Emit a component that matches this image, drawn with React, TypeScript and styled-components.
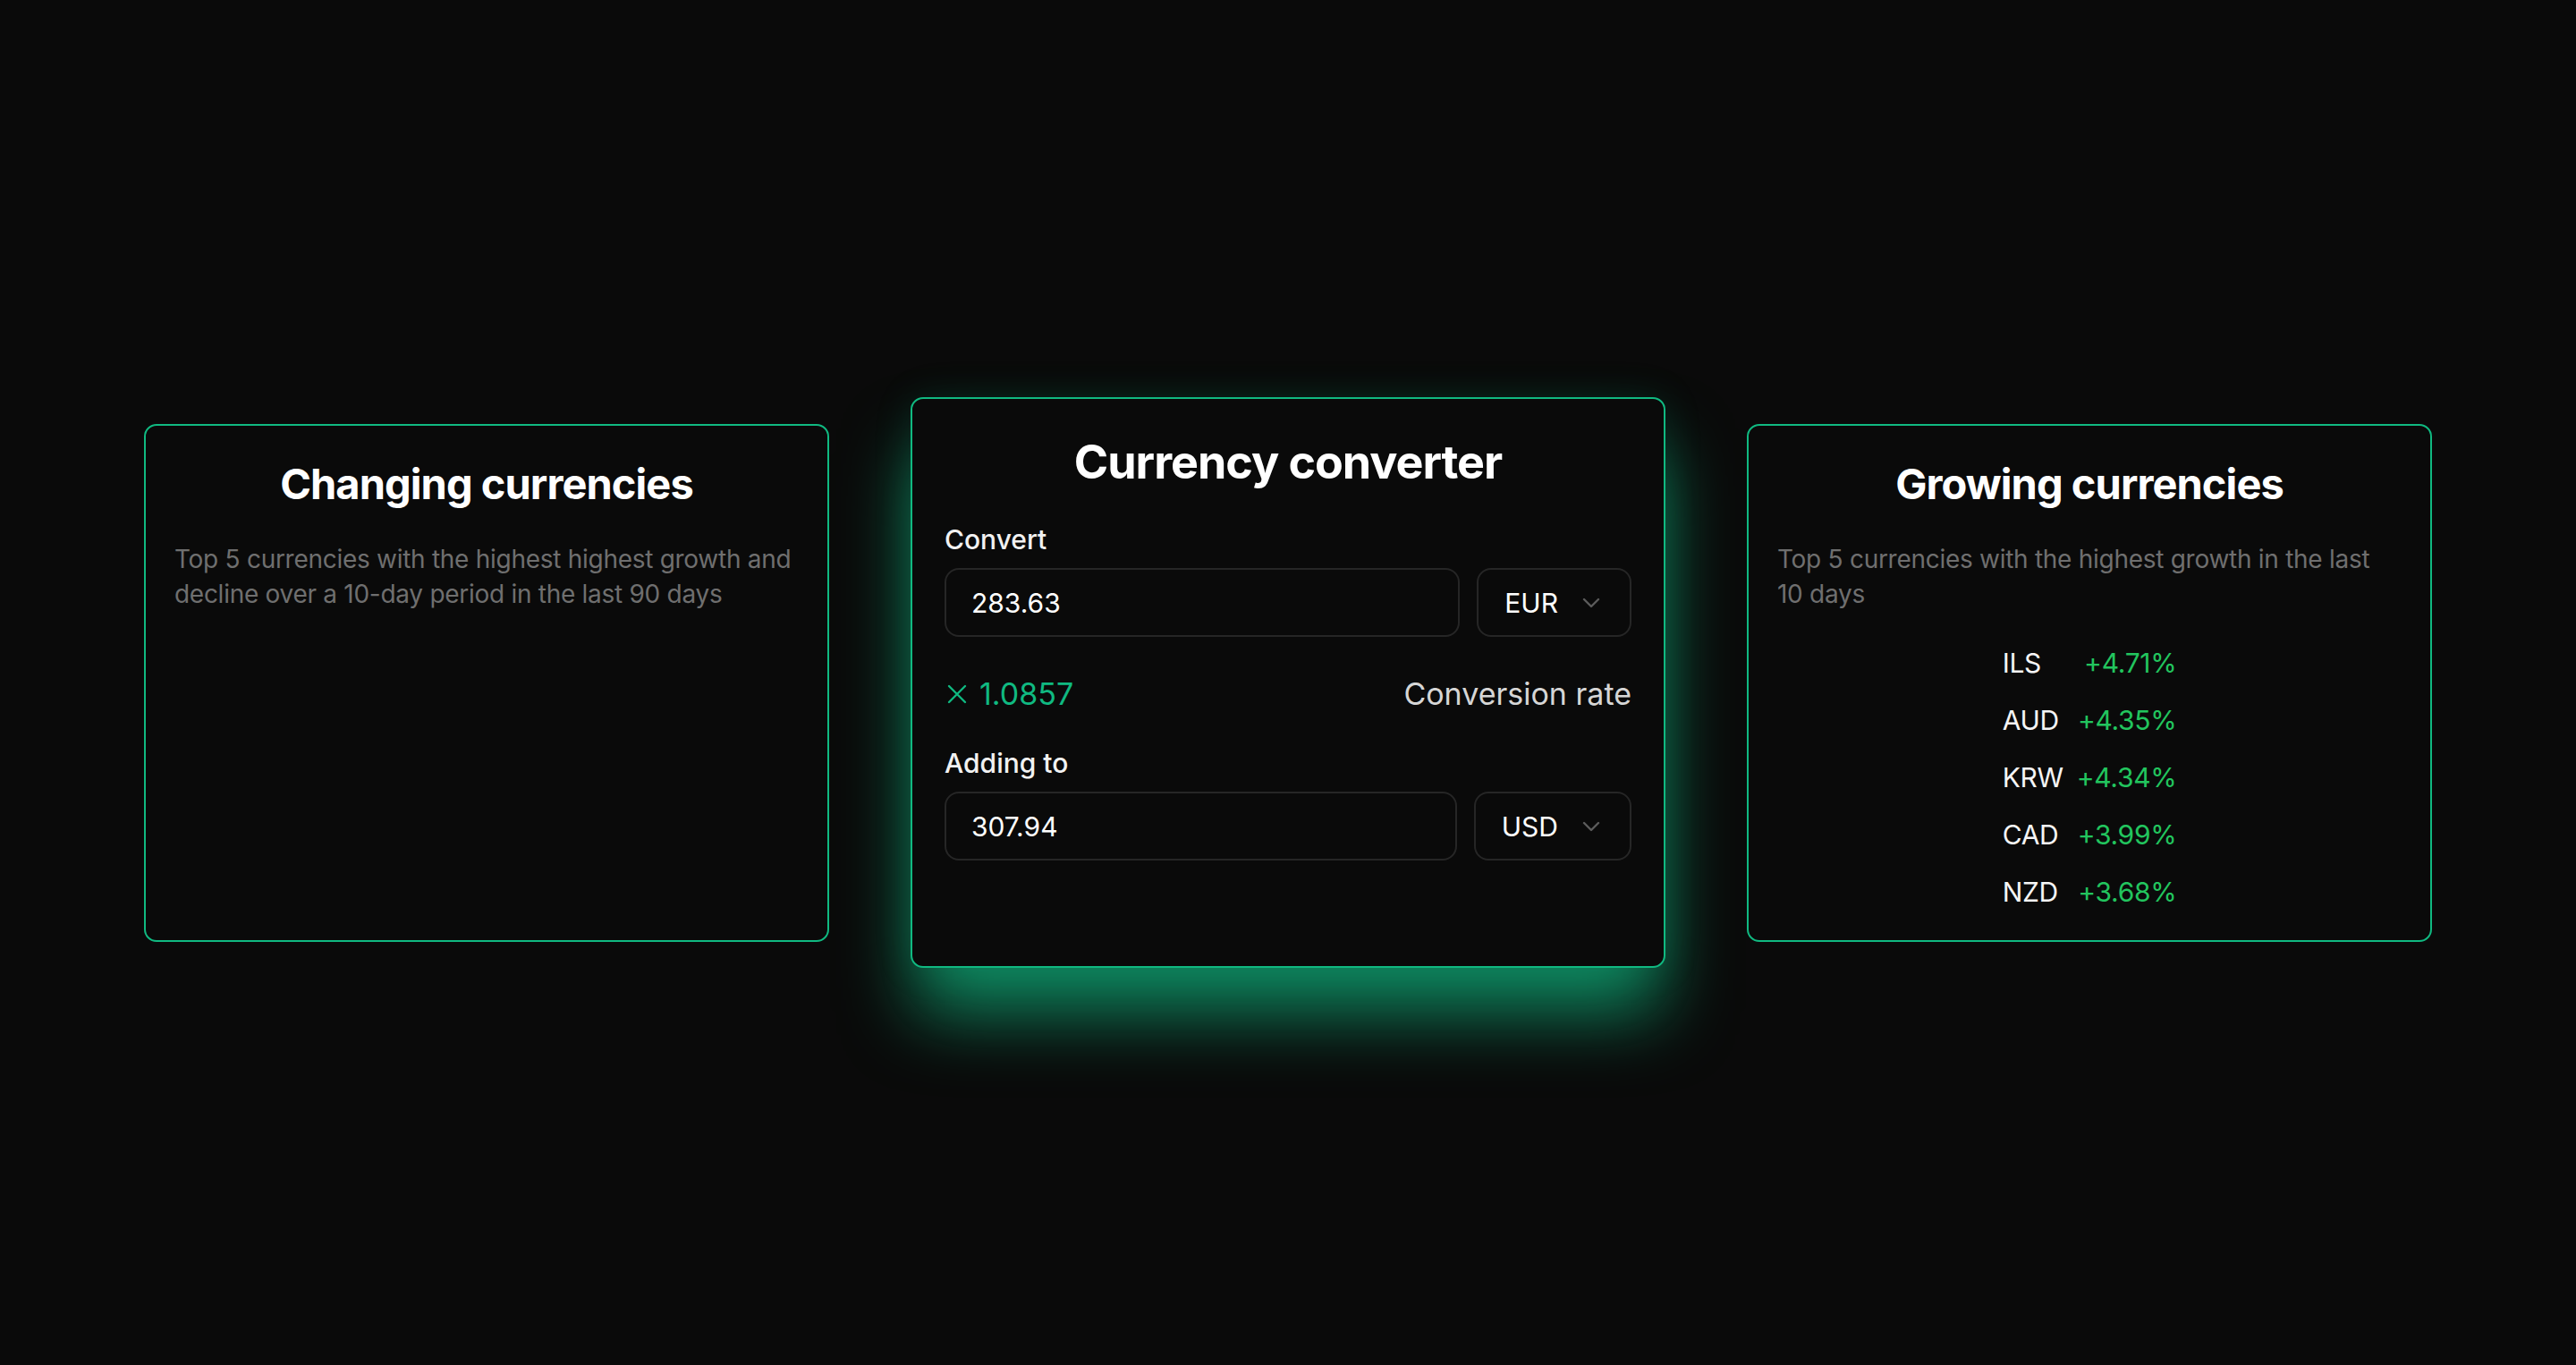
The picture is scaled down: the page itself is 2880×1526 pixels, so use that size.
import { FC, Fragment } from "react";
import styled, { createGlobalStyle } from "styled-components";

const GlobalStyle = createGlobalStyle`
  html, body {
    margin: 0;
    padding: 0;
    background: #0a0a0a;
    font-family: Inter, "Noto Sans", "Liberation Sans", sans-serif;
    color: #fff;
  }
  * {
    box-sizing: border-box;
  }
`

const growth = [
  { code: "ILS", change: "+4.71%" },
  { code: "AUD", change: "+4.35%" },
  { code: "KRW", change: "+4.34%" },
  { code: "CAD", change: "+3.99%" },
  { code: "NZD", change: "+3.68%" },
]

const Page = styled.div`
  min-height: 100vh;
  display: flex;
  align-items: center;
  justify-content: center;
  gap: 91px;
`

const Card = styled.section<{ $featured?: boolean }>`
  width: ${p => (p.$featured ? "844px" : "766px")};
  height: ${p => (p.$featured ? "638px" : "579px")};
  padding: ${p => (p.$featured ? "40px 36px" : "37px 32px")};
  border: 2px solid #10b981;
  border-radius: 14px;
  background: #0a0a0a;
  display: flex;
  flex-direction: column;
  box-shadow: ${p =>
    p.$featured
      ? "0 55px 80px -5px rgba(16, 185, 129, 0.72), 0 0 45px rgba(16, 185, 129, 0.12)"
      : "none"};
`

const Title = styled.h2<{ $big?: boolean }>`
  margin: 0;
  text-align: center;
  font-weight: 700;
  font-size: ${p => (p.$big ? "52px" : "47px")};
  line-height: ${p => (p.$big ? "62px" : "56px")};
  letter-spacing: -0.02em;
  color: #fff;
`

const Description = styled.p`
  margin: 37px 0 0;
  font-size: 28px;
  line-height: 39px;
  letter-spacing: -0.01em;
  color: #6f6f6f;
`

const FieldLabel = styled.div`
  margin-top: 37px;
  font-size: 30px;
  line-height: 36px;
  font-weight: 500;
  color: #f2f2f2;
`

const InputRow = styled.div`
  margin-top: 14px;
  display: flex;
  gap: 19px;
`

const AmountInput = styled.input`
  flex: 1;
  min-width: 0;
  height: 77px;
  padding: 0 28px;
  border: 2px solid #262626;
  border-radius: 16px;
  background: #0a0a0a;
  color: #fff;
  font-family: inherit;
  font-size: 30px;
  outline: none;
`

const CurrencySelect = styled.div`
  height: 77px;
  padding: 0 33px 0 29px;
  border: 2px solid #262626;
  border-radius: 16px;
  display: flex;
  align-items: center;
  gap: 27px;
  font-size: 30px;
  color: #fff;
`

const RateRow = styled.div`
  margin-top: 42px;
  display: flex;
  justify-content: space-between;
  align-items: center;
  font-size: 34px;
  line-height: 44px;
`

const RateValue = styled.span`
  display: flex;
  align-items: center;
  gap: 14px;
  padding-left: 3px;
  color: #10b981;
`

const RateLabel = styled.span`
  color: #d6d6d6;
`

const GrowthList = styled.div`
  margin-top: 25px;
  align-self: center;
  display: grid;
  grid-template-columns: auto auto;
  column-gap: 15px;
  grid-auto-rows: 64px;
  align-items: center;
  font-size: 30px;
  letter-spacing: -0.01em;
`

const Code = styled.span`
  color: #f5f5f5;
`

const Change = styled.span`
  justify-self: end;
  color: #22c55e;
`

const Chevron: FC = () => (
  <svg width="20" height="12" viewBox="0 0 20 12" fill="none">
    <path d="M2 2l8 8 8-8" stroke="#5c5c5c" strokeWidth="2.4" strokeLinecap="round" strokeLinejoin="round" />
  </svg>
)

const Times: FC = () => (
  <svg width="22" height="22" viewBox="0 0 22 22" fill="none">
    <path d="M2 2l18 18M20 2L2 20" stroke="#10b981" strokeWidth="2.4" strokeLinecap="round" />
  </svg>
)

type FieldProps = {
  label: string
  amount: string
  currency: string
}

const Field: FC<FieldProps> = ({ label, amount, currency }) => (
  <>
    <FieldLabel>{label}</FieldLabel>
    <InputRow>
      <AmountInput defaultValue={amount} />
      <CurrencySelect>
        {currency}
        <Chevron />
      </CurrencySelect>
    </InputRow>
  </>
)

const App: FC = () => {
  return (
    <>
      <GlobalStyle />
      <Page>
        <Card>
          <Title>Changing currencies</Title>
          <Description>
            Top 5 currencies with the highest highest growth and decline over a 10-day period in the last 90 days
          </Description>
        </Card>

        <Card $featured>
          <Title $big>Currency converter</Title>
          <Field label="Convert" amount="283.63" currency="EUR" />
          <RateRow>
            <RateValue>
              <Times />
              1.0857
            </RateValue>
            <RateLabel>Conversion rate</RateLabel>
          </RateRow>
          <Field label="Adding to" amount="307.94" currency="USD" />
        </Card>

        <Card>
          <Title>Growing currencies</Title>
          <Description>Top 5 currencies with the highest growth in the last 10 days</Description>
          <GrowthList>
            {growth.map(g => (
              <Fragment key={g.code}>
                <Code>{g.code}</Code>
                <Change>{g.change}</Change>
              </Fragment>
            ))}
          </GrowthList>
        </Card>
      </Page>
    </>
  )
}

export default App;
